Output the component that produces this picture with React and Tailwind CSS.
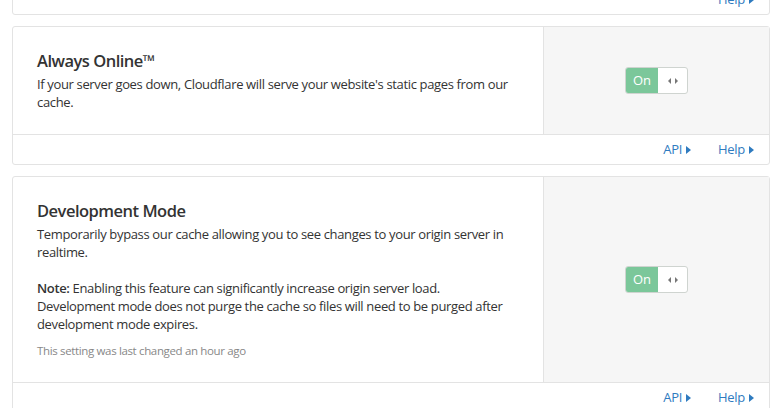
import React from "react";

const Arrow = () => (
  <svg width="5" height="8" viewBox="0 0 5 8" className="ml-[4px] inline-block" aria-hidden="true">
    <path d="M0 0 L5 4 L0 8 Z" fill="currentColor" />
  </svg>
);

const Footer = ({ api = true }) => (
  <div className="flex h-[29px] items-center justify-end gap-[27px] pr-[15px] text-[13px] tracking-[-0.3px] text-[#2f7bbf]">
    {api && <span className="flex items-center">API<Arrow /></span>}
    <span className="flex items-center">Help<Arrow /></span>
  </div>
);

const Toggle = () => (
  <div className="flex h-[27px] w-[63px] overflow-hidden rounded-[3px] border border-[#cfd4d0] bg-white">
    <div className="flex w-[32px] items-center justify-center bg-[#7bc79a] text-[13px] text-white">On</div>
    <div className="flex flex-1 items-center justify-center">
      <svg width="10" height="6" viewBox="0 0 10 6" aria-hidden="true">
        <path d="M3 0 L0 3 L3 6 Z" fill="#777" />
        <path d="M7 0 L10 3 L7 6 Z" fill="#777" />
      </svg>
    </div>
  </div>
);

const Card = ({ children }) => (
  <div className="flex flex-col rounded-[3px] border border-[#e3e3e3] bg-white">
    <div className="flex">
      <div className="flex-1 px-[24px] pt-[22px] pb-[23px]">{children}</div>
      <div className="flex w-[226px] items-center justify-center border-l border-[#e3e3e3] bg-[#f6f6f6]">
        <Toggle />
      </div>
    </div>
    <div className="border-t border-[#e3e3e3]">
      <Footer />
    </div>
  </div>
);

export default function App() {
  return (
    <div
      className="h-[408px] w-[784px] overflow-hidden bg-white text-[#333]"
      style={{ fontFamily: '"Open Sans", "Noto Sans", sans-serif' }}
    >
      <div className="-mt-[16px] ml-[12px] flex w-[758px] flex-col gap-[11px]">
        <div className="rounded-[3px] border border-[#e3e3e3] bg-white">
          <Footer api={false} />
        </div>
        <Card>
          <h2 className="mb-[2px] text-[16.5px] font-semibold leading-[24px] tracking-[-0.5px] text-[#333]">Always Online™</h2>
          <p className="max-w-[484px] text-[13px] leading-[18px] tracking-[-0.35px]">
            If your server goes down, Cloudflare will serve your website's static pages from our cache.
          </p>
        </Card>
        <Card>
          <h2 className="mb-[2px] text-[16.5px] font-semibold leading-[24px] tracking-[-0.5px] text-[#333]">Development Mode</h2>
          <p className="mb-[18px] max-w-[484px] text-[13px] leading-[18px] tracking-[-0.35px]">
            Temporarily bypass our cache allowing you to see changes to your origin server in realtime.
          </p>
          <p className="max-w-[484px] text-[13px] leading-[18px] tracking-[-0.35px]">
            <strong className="font-semibold">Note:</strong> Enabling this feature can significantly increase origin server load. Development mode does not purge the cache so files will need to be purged after development mode expires.
          </p>
          <p className="mt-[10px] text-[11.5px] leading-[16px] tracking-[-0.35px] text-[#888]">This setting was last changed an hour ago</p>
        </Card>
      </div>
    </div>
  );
}
